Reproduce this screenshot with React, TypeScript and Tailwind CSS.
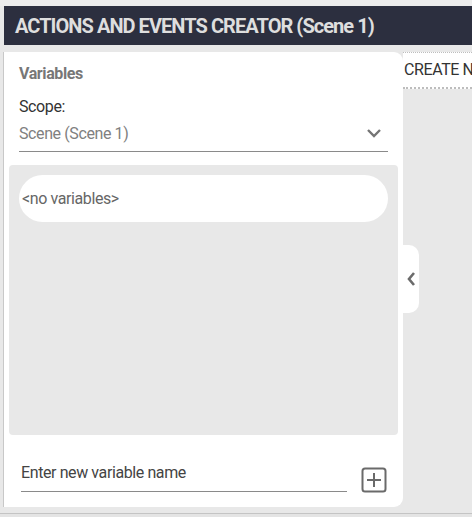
import React from 'react';

const ChevronDown = () => (
  <svg width="16" height="10" viewBox="0 0 16 10" fill="none">
    <path d="M2 2l6 6 6-6" stroke="#757575" strokeWidth="2.4" />
  </svg>
);

const ChevronLeft = () => (
  <svg width="10" height="16" viewBox="0 0 10 16" fill="none">
    <path d="M8 2L3 8l5 6" stroke="#6b6b6b" strokeWidth="2.6" />
  </svg>
);

const PlusBox = () => (
  <svg width="26" height="26" viewBox="0 0 26 26" fill="none">
    <rect x="1.5" y="1.5" width="23" height="23" rx="2.5" stroke="#6a6a6a" strokeWidth="2" />
    <path d="M13 6v14M6 13h14" stroke="#6a6a6a" strokeWidth="2" />
  </svg>
);

export default function App() {
  return (
    <div
      className="w-[472px] h-[517px] bg-[#e8e8e8] overflow-hidden flex flex-col"
      style={{ fontFamily: 'Roboto, "Liberation Sans", sans-serif' }}
    >
      {/* top strip */}
      <div className="h-[6px] bg-[#ececec] shrink-0" />

      {/* Header */}
      <div className="ml-[4px] h-[39px] shrink-0 bg-[#2c2f3f] flex items-center pl-[11px]">
        <span className="text-[20px] font-bold text-[#dedede] tracking-[-0.95px] whitespace-nowrap">
          ACTIONS AND EVENTS CREATOR (Scene 1)
        </span>
      </div>

      <div className="flex flex-1 pt-[7px] pb-[6px] relative">
        {/* left edge line */}
        <div className="w-[4px] shrink-0 border-r border-[#c8c8c8]" />

        {/* Panel */}
        <div className="w-[399px] shrink-0 bg-white rounded-r-[9px] flex flex-col pt-[12px] pb-[15px]">
          <div className="px-[15px]">
            <div className="text-[16px] font-bold text-[#777] tracking-[-0.4px] leading-[20px]">Variables</div>
            <div className="mt-[13px] text-[16px] text-[#333] tracking-[-0.4px] leading-[20px]">Scope:</div>
            <div className="mt-[6px] flex items-center justify-between border-b border-[#8a8a8a] pb-[6px] h-[29px]">
              <span className="text-[16px] text-[#808080] tracking-[-0.4px] leading-[20px]">Scene (Scene 1)</span>
              <span className="mr-[6px] mt-[-2px]"><ChevronDown /></span>
            </div>
          </div>

          {/* list */}
          <div className="mx-[5px] mt-[13px] h-[270px] bg-[#e8e8e8] rounded-[4px] p-[10px]">
            <div className="h-[47px] bg-white rounded-full flex items-center pl-[3px]">
              <span className="text-[16px] text-[#666] tracking-[-0.4px]">&lt;no variables&gt;</span>
            </div>
          </div>

          {/* input */}
          <div className="mt-auto flex items-end pl-[17px] pr-[16px]">
            <div className="w-[326px] border-b border-[#8a8a8a] pb-[6px]">
              <span className="text-[16px] text-[#444] tracking-[-0.4px] leading-[20px]">Enter new variable name</span>
            </div>
            <div className="ml-auto mb-[-1px]"><PlusBox /></div>
          </div>
        </div>

        {/* collapse tab */}
        <div className="absolute left-[403px] top-[200px] w-[16px] h-[68px] bg-white rounded-r-[10px] flex items-center justify-center">
          <ChevronLeft />
        </div>

        {/* right side */}
        <div className="flex-1 min-w-0 overflow-hidden flex flex-col">
          <div className="h-[37px] bg-white border-t border-b-2 border-dotted border-[#bdbdbd] flex items-center pl-[1px]">
            <span className="text-[16px] text-[#333] tracking-[-0.4px] whitespace-nowrap">CREATE NODE</span>
          </div>
        </div>
      </div>

      {/* bottom edge */}
      <div className="h-[4px] shrink-0 border-t border-[#c4c4c4] bg-[#e4e4e4]" />
    </div>
  );
}
